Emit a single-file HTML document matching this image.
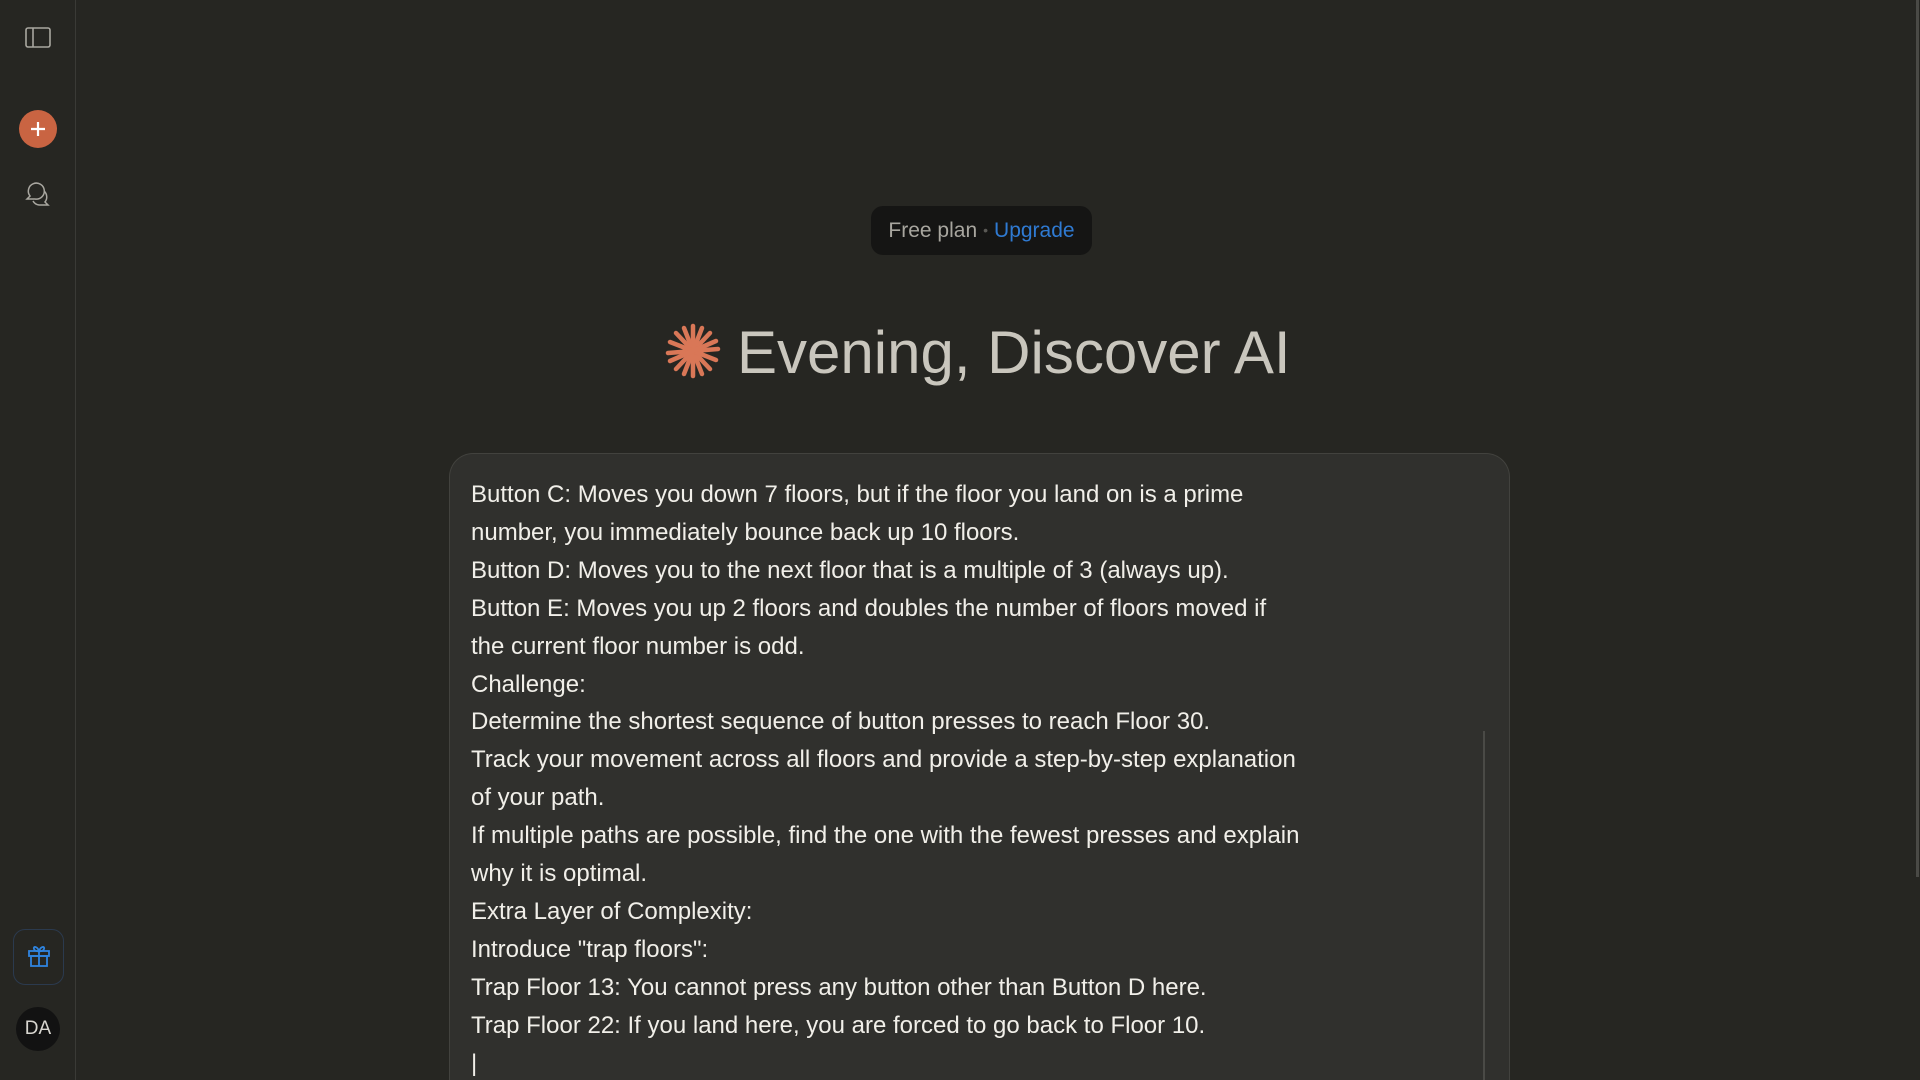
<!DOCTYPE html>
<html><head><meta charset="utf-8"><style>
*{margin:0;padding:0;box-sizing:border-box}
html,body{width:1920px;height:1080px;overflow:hidden;background:#262622;font-family:"Liberation Sans",Arial,sans-serif}
.wrap{position:relative;width:1920px;height:1080px;overflow:hidden}
.side{position:absolute;left:0;top:0;width:76px;height:1080px;border-right:1px solid #3a3a36;background:#262622}
.plus{position:absolute;left:19px;top:110px;width:38px;height:38px;border-radius:50%;background:#c96442}
.gift{position:absolute;left:13px;top:929px;width:51px;height:56px;border:1px solid #2b3a4e;border-radius:12px}
.da{position:absolute;left:16px;top:1007px;width:44px;height:44px;border-radius:50%;background:#121212;color:#d8d6d0;font-size:19px;text-align:center;line-height:44px}
.pill{position:absolute;left:871px;top:206px;width:221px;height:49px;border-radius:12px;background:#151514;text-align:center;line-height:49px;font-size:21px;color:#a8a69f}
.pill b{font-weight:normal;color:#2f7ad2}
.pill i{font-style:normal;color:#5a5955;font-size:14px;margin:0 6px;position:relative;top:-2px}
h1{position:absolute;left:737px;top:318px;font-weight:normal;font-size:60px;color:#c9c6bd;white-space:nowrap}
.box{position:absolute;left:449px;top:453px;width:1061px;height:627px;border:1px solid #42423e;border-bottom:none;border-radius:24px 24px 0 0;background:#30302d}
.txt{position:absolute;left:471px;top:476px;font-size:24px;line-height:37.9px;color:#f1efe9;white-space:pre}
.sb{position:absolute;left:1483px;top:731px;width:2px;height:349px;background:#4a4a46}
.psb{position:absolute;left:1916px;top:0;width:3px;height:877px;background:#4a4a46}
</style></head><body><div class="wrap">
<div class="side">
<svg style="position:absolute;left:25px;top:27px" width="26" height="21" viewBox="0 0 26 21"><rect x="1" y="1" width="24" height="19" rx="2" fill="none" stroke="#a9a7a0" stroke-width="1.6"/><line x1="8" y1="1" x2="8" y2="20" stroke="#a9a7a0" stroke-width="1.6"/></svg>
<div class="plus"><svg width="38" height="38"><path d="M19 12v14M12 19h14" stroke="#fff" stroke-width="2.2"/></svg></div>
<svg style="position:absolute;left:24px;top:181px" width="28" height="28" viewBox="0 0 28 28"><path d="M3 18 L6 15 A8 8 0 1 1 11 18 Z" fill="none" stroke="#a9a7a0" stroke-width="1.5"/><path d="M20 10 A8 8 0 0 1 21 21 L24 24 H15 A8 8 0 0 1 9 20" fill="none" stroke="#a9a7a0" stroke-width="1.5"/></svg>
<div class="gift"><svg style="position:absolute;left:13px;top:14px" width="24" height="24" viewBox="0 0 24 24" fill="none" stroke="#2f84e0" stroke-width="1.8"><rect x="2" y="7" width="20" height="5"/><rect x="4" y="12" width="16" height="10"/><path d="M12 7v15M12 7C10 2 6 2 7 5s5 2 5 2M12 7c2-5 6-5 5-2s-5 2-5 2"/></svg></div>
<div class="da">DA</div>
</div>
<div class="pill">Free plan<i>•</i><b>Upgrade</b></div>
<svg style="position:absolute;left:665px;top:323px" width="56" height="56" viewBox="-28 -28 56 56"><g stroke="#d97757" stroke-width="4.5" stroke-linecap="round">
<line x1="0" y1="-25" x2="0" y2="25"/><line x1="-25" y1="2" x2="25" y2="-2"/><line x1="-17" y1="-18" x2="17" y2="18"/><line x1="-17" y1="18" x2="17" y2="-18"/><line x1="-9" y1="-23" x2="9" y2="23"/><line x1="9" y1="-23" x2="-9" y2="23"/><line x1="-23" y1="-9" x2="23" y2="9"/><line x1="-23" y1="10" x2="23" y2="-10"/></g></svg>
<h1>Evening, Discover AI</h1>
<div class="box"></div>
<div class="txt">Button C: Moves you down 7 floors, but if the floor you land on is a prime
number, you immediately bounce back up 10 floors.
Button D: Moves you to the next floor that is a multiple of 3 (always up).
Button E: Moves you up 2 floors and doubles the number of floors moved if
the current floor number is odd.
Challenge:
Determine the shortest sequence of button presses to reach Floor 30.
Track your movement across all floors and provide a step-by-step explanation
of your path.
If multiple paths are possible, find the one with the fewest presses and explain
why it is optimal.
Extra Layer of Complexity:
Introduce "trap floors":
Trap Floor 13: You cannot press any button other than Button D here.
Trap Floor 22: If you land here, you are forced to go back to Floor 10.
|</div>
<div class="sb"></div>
<div class="psb"></div>
</div></body></html>
